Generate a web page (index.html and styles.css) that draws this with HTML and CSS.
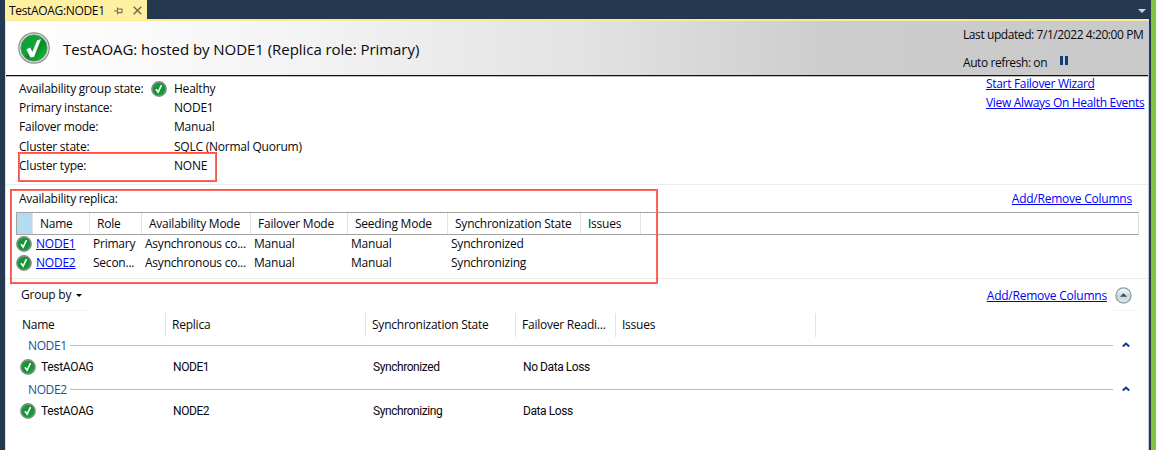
FILE: index.html
```
<!DOCTYPE html>
<html lang="en">
<head>
<meta charset="utf-8">
<title>TestAOAG:NODE1</title>
<link rel="stylesheet" href="styles.css">
</head>
<body>
<svg class="defs" width="0" height="0" aria-hidden="true">
  <defs>
    <linearGradient id="green" x1="0" y1="0" x2="1" y2="1">
      <stop offset="0" stop-color="#0a9a30"/><stop offset=".45" stop-color="#12a53a"/><stop offset=".55" stop-color="#078a25"/><stop offset="1" stop-color="#12c83c"/>
    </linearGradient>
    <linearGradient id="green-small" x1="0" y1="0" x2="1" y2="1">
      <stop offset="0" stop-color="#1cab40"/><stop offset=".5" stop-color="#0d8f30"/><stop offset="1" stop-color="#12b53c"/>
    </linearGradient>
    <linearGradient id="orb" x1="0" y1="0" x2="0" y2="1">
      <stop offset="0" stop-color="#fff"/><stop offset=".5" stop-color="#cfd6d0"/><stop offset="1" stop-color="#dfe9d8"/>
    </linearGradient>
    <symbol id="ok" viewBox="0 0 32 32">
      <circle cx="16" cy="16" r="15.2" fill="#e8e8e8" stroke="#8c8c8c" stroke-width="1.2"/>
      <circle cx="16" cy="16" r="13.2" fill="url(#green)" stroke="#6f8a72" stroke-width=".7"/>
      <path d="M8.4 17.4l3.6-1.8 2.4 4.2 4.8-11.6 3.8-1-7 17.8-3.6.6z" fill="#fff"/>
    </symbol>
    <symbol id="ok-small" viewBox="0 0 16 16">
      <circle cx="8" cy="8" r="7.1" fill="url(#green-small)" stroke="#888c88" stroke-width="1.6"/>
      <path d="M4.9 8.2l2.2 2.9 3.4-7" fill="none" stroke="#fff" stroke-width="1.7"/>
    </symbol>
    <symbol id="chev" viewBox="0 0 8 6"><path d="M.8 4.6L4 1.6l3.2 3" fill="none" stroke="#0a3a94" stroke-width="2"/></symbol>
  </defs>
</svg>
<div class="window">
  <div class="tabbar">
    <div class="tab">
      <span class="tab-title">TestAOAG:NODE1</span>
      <svg class="pin" viewBox="0 0 9 8"><path d="M0 4h3M3.5 .5v7M3.5 2H8v3.5H3.5M3.5 5.8H8" fill="none" stroke="#7c6f4e" stroke-width="1.1"/></svg>
      <svg class="close" viewBox="0 0 9 9"><path d="M.7.7l7.6 7.6M8.3.7L.7 8.3" stroke="#776a4c" stroke-width="1.5"/></svg>
    </div>
    <svg class="tab-menu" viewBox="0 0 8 4"><path d="M0 0h8L4 4z" fill="#cdd4df"/></svg>
  </div>
  <main class="panel">
    <header class="header">
      <svg class="big-ok"><use href="#ok"/></svg>
      <h1 class="title">TestAOAG: hosted by NODE1 (Replica role: Primary)</h1>
      <div class="status">
        <div class="updated">Last updated: 7/1/2022 4:20:00 PM</div>
        <div class="refresh"><span>Auto refresh: on</span><svg class="pause" viewBox="0 0 8 8" preserveAspectRatio="none"><path d="M0 0h3v8H0zM5 0h3v8H5z" fill="#123f7c"/></svg></div>
      </div>
    </header>
    <section class="summary">
      <dl class="facts">
        <dt>Availability group state:</dt><dd><svg class="ok fact-ok"><use href="#ok-small"/></svg>Healthy</dd>
        <dt>Primary instance:</dt><dd>NODE1</dd>
        <dt>Failover mode:</dt><dd>Manual</dd>
        <dt>Cluster state:</dt><dd>SQLC (Normal Quorum)</dd>
        <dt>Cluster type:</dt><dd>NONE</dd>
      </dl>
      <nav class="actions">
        <a class="link">Start Failover Wizard</a>
        <a class="link">View Always On Health Events</a>
      </nav>
    </section>
    <section class="replicas">
      <div class="section-top"><span>Availability replica:</span><a class="link">Add/Remove Columns</a></div>
      <div class="grid head">
        <span class="sel"></span><span>Name</span><span>Role</span><span>Availability Mode</span><span>Failover Mode</span><span>Seeding Mode</span><span>Synchronization State</span><span>Issues</span>
      </div>
      <div class="grid row"><svg class="ok"><use href="#ok-small"/></svg><a class="link">NODE1</a><span>Primary</span><span>Asynchronous co...</span><span>Manual</span><span>Manual</span><span>Synchronized</span></div>
      <div class="grid row"><svg class="ok"><use href="#ok-small"/></svg><a class="link">NODE2</a><span>Secon...</span><span>Asynchronous co...</span><span>Manual</span><span>Manual</span><span>Synchronizing</span></div>
    </section>
    <section class="databases">
      <div class="db-top">
        <div class="group-by">Group by<svg class="drop" viewBox="0 0 6 3"><path d="M0 0h6L3 3z"/></svg></div>
        <a class="link">Add/Remove Columns</a>
        <div class="collapse"><svg class="orb" viewBox="0 0 17 17"><circle cx="8.5" cy="8.5" r="7.6" fill="url(#orb)" stroke="#7f9bb0" stroke-width="1.2"/><path d="M5 9.7L8.5 6.2 12 9.7z" fill="#29506c"/></svg></div>
      </div>
      <div class="dbgrid dbhead"><span>Name</span><span>Replica</span><span>Synchronization State</span><span>Failover Readi...</span><span>Issues</span></div>
      <div class="group"><span>NODE1</span><i></i><svg class="chev"><use href="#chev"/></svg></div>
      <div class="dbgrid dbrow"><span class="db"><svg class="ok"><use href="#ok-small"/></svg>TestAOAG</span><span>NODE1</span><span>Synchronized</span><span>No Data Loss</span></div>
      <div class="group"><span>NODE2</span><i></i><svg class="chev"><use href="#chev"/></svg></div>
      <div class="dbgrid dbrow"><span class="db"><svg class="ok"><use href="#ok-small"/></svg>TestAOAG</span><span>NODE2</span><span>Synchronizing</span><span>Data Loss</span></div>
    </section>
  </main>
  <div class="mark mark-type"></div>
  <div class="mark mark-replicas"></div>
</div>
</body>
</html>
```

FILE: styles.css
```
* { box-sizing: border-box; }
body {
  margin: 0; width: 1156px; height: 450px; overflow: hidden;
  background: #82c341; color: #08080e;
  font: 12px/19px "Open Sans", "Noto Sans", sans-serif;
  letter-spacing: -.23px; white-space: nowrap;
}
svg { display: block; flex: none; }
.defs { position: absolute; }
.window { position: relative; width: 1151px; height: 450px; padding: 0 2px 0 5px; background: #24384f; }
.tabbar { display: flex; height: 19px; justify-content: space-between; }
.tab { display: flex; align-items: center; width: 142px; height: 20px; padding: 1px 5px 0 4px; background: #ffefa0; }
.tab-title { width: 95px; letter-spacing: -.33px; }
.pin { width: 9px; height: 8px; margin-left: 10px; }
.close { width: 9px; height: 9px; margin-left: 10px; }
.tab-menu { width: 8px; height: 4px; margin: 9px 3px 0 0; }
.panel { height: 431px; background: #fff; border-top: 2px solid #fbe994; border-left: 1px solid #d7dce5; border-right: 1px solid #c3c9d3; }
.header { display: flex; align-items: center; height: 55px; padding-left: 12px; border-bottom: 1px solid #111; box-shadow: 0 1px #bbb; background: linear-gradient(90deg, #fff, #f4f4f4 25%, #e3e3e3 50%, #cdcdcd 72%, #c9c9c9); }
.big-ok { width: 32px; height: 32px; }
.title { margin: 3px 0 0 13px; font-size: 15px; font-weight: 400; letter-spacing: -.05px; }
.status { width: 185px; margin-left: auto; padding-top: 1px; letter-spacing: -.42px; }
.updated { height: 28px; }
.refresh { display: flex; height: 19px; }
.pause { width: 8px; height: 9px; margin: 3px 0 0 13px; }
.summary { display: flex; justify-content: space-between; height: 109px; padding: 3px 4px 0 13px; border-bottom: 1px solid #ececec; }
.facts { display: grid; grid-template-columns: 155px auto; grid-auto-rows: 19.2px; margin: 0; }
.facts dd { position: relative; margin: 0; }
.fact-ok { position: absolute; left: -23px; top: 2px; }
.ok { width: 16px; height: 16px; }
.actions { display: flex; flex-direction: column; width: 158px; margin-top: -5px; letter-spacing: -.32px; }
.link { color: #0000fa; text-decoration: underline; text-underline-offset: 1px; text-decoration-thickness: 1px; }
.replicas { height: 94px; padding: 4px 9px 0 10px; border-bottom: 1px solid #ececec; }
.section-top { display: flex; justify-content: space-between; height: 23px; padding: 0 7px 0 3px; }
.grid { display: grid; grid-template-columns: 17px 57px 52px 109px 97px 100px 133px 60px; }
.head { height: 23px; border: 1px solid #a3a3a3; border-right-color: #ddd; grid-template-columns: 16px 57px 52px 109px 97px 100px 133px 60px; }
.head span { border-right: 1px solid #e3e3e3; padding: 1px 0 0 7px; }
.head .sel { background: #b3dcf0; padding: 0; }
.row { height: 19px; line-height: 17px; }
.row > svg { margin-top: 1px; }
.row > span { padding-left: 3px; }
.row > a { justify-self: start; margin-left: 3px; }
.databases { padding: 7px 9px 0 10px; }
.db-top { display: flex; height: 27px; }
.group-by { display: flex; width: 73px; height: 25px; padding-left: 5px; line-height: 18px; border-bottom: 1px solid #eff6fb; }
.drop { width: 6px; height: 3px; margin: 8px 0 0 5px; }
.db-top .link { margin-left: auto; margin-right: 6px; }
.collapse { width: 26px; height: 25px; padding-left: 2px; border-bottom: 1px solid #eff6fb; }
.orb { width: 17px; height: 17px; margin-top: 1px; }
.dbgrid { display: grid; grid-template-columns: 150px 200px 150px 100px 200px; }
.dbhead { height: 24px; line-height: 23px; }
.dbhead span { padding-left: 6px; border-right: 1px solid #e3e3e3; }
.group { display: flex; align-items: center; height: 20px; margin-top: -1px; margin-bottom: 1px; padding: 0 9px 0 12px; line-height: 17px; color: #1c50a0; }
.group i { flex: 1; height: 1px; margin: 0 9px 2px 4px; background: #aebfdc; }
.group span { width: 38px; margin-bottom: 1px; letter-spacing: -.4px; }
.chev { width: 8px; height: 6px; margin-bottom: 2px; }
.dbrow { height: 24px; line-height: 21px; font-family: Roboto, sans-serif; font-size: 12px; letter-spacing: -.43px; }
.dbrow span { padding-left: 7px; }
.dbrow .db { display: flex; align-items: center; gap: 5px; height: 20px; padding-left: 4px; letter-spacing: -.3px; }
.mark { position: absolute; border: 2px solid #ff6a60; outline: 1px dotted #ff3c30; outline-offset: -1px; }
.mark-type { left: 18px; top: 152px; width: 199px; height: 30px; }
.mark-replicas { left: 10px; top: 189px; width: 648px; height: 95px; }
```
